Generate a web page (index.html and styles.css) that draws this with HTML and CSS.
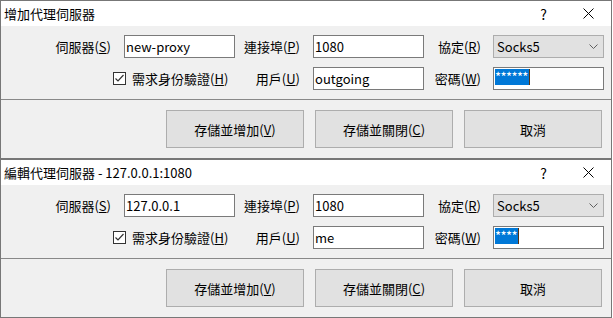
FILE: index.html
```html
<!DOCTYPE html>
<html lang="zh-Hant">
<head>
<meta charset="utf-8">
<title>代理伺服器</title>
<link rel="stylesheet" href="styles.css">
</head>
<body>
<div class="dlg">
  <div class="titlebar">
    <span class="title">增加代理伺服器</span>
    <span class="tbtn help">?</span>
    <span class="tbtn close"><svg width="11" height="11" viewBox="0 0 11 11"><path d="M0.5 0.5L10.5 10.5M10.5 0.5L0.5 10.5" stroke="#000" stroke-width="1" fill="none"/></svg></span>
  </div>
  <div class="form">
    <span class="lbl">伺服器(<u>S</u>)</span>
    <div class="input">new-proxy</div>
    <span class="lbl">連接埠(<u>P</u>)</span>
    <div class="input">1080</div>
    <span class="lbl p12">協定(<u>R</u>)</span>
    <div class="select"><span>Socks5</span><svg width="9" height="5" viewBox="0 0 9 5"><path d="M0.5 0.5L4.5 4.5L8.5 0.5" stroke="#606060" stroke-width="1" fill="none"/></svg></div>
    <div class="chk"><span class="box"><svg width="11" height="11" viewBox="0 0 11 11"><path d="M1.5 5.5L4 8L9.5 2" stroke="#333" stroke-width="1.2" fill="none"/></svg></span><span>需求身份驗證(<u>H</u>)</span></div>
    <span class="lbl">用戶(<u>U</u>)</span>
    <div class="input">outgoing</div>
    <span class="lbl p12">密碼(<u>W</u>)</span>
    <div class="input pw"><span class="sel">******</span><span class="caret"></span></div>
  </div>
  <div class="actions">
    <button class="btn">存儲並增加(<u>V</u>)</button>
    <button class="btn">存儲並關閉(<u>C</u>)</button>
    <button class="btn">取消</button>
  </div>
</div>
<div class="dlg">
  <div class="titlebar">
    <span class="title">編輯代理伺服器 - 127.0.0.1:1080</span>
    <span class="tbtn help">?</span>
    <span class="tbtn close"><svg width="11" height="11" viewBox="0 0 11 11"><path d="M0.5 0.5L10.5 10.5M10.5 0.5L0.5 10.5" stroke="#000" stroke-width="1" fill="none"/></svg></span>
  </div>
  <div class="form">
    <span class="lbl">伺服器(<u>S</u>)</span>
    <div class="input">127.0.0.1</div>
    <span class="lbl">連接埠(<u>P</u>)</span>
    <div class="input">1080</div>
    <span class="lbl p12">協定(<u>R</u>)</span>
    <div class="select"><span>Socks5</span><svg width="9" height="5" viewBox="0 0 9 5"><path d="M0.5 0.5L4.5 4.5L8.5 0.5" stroke="#606060" stroke-width="1" fill="none"/></svg></div>
    <div class="chk"><span class="box"><svg width="11" height="11" viewBox="0 0 11 11"><path d="M1.5 5.5L4 8L9.5 2" stroke="#333" stroke-width="1.2" fill="none"/></svg></span><span>需求身份驗證(<u>H</u>)</span></div>
    <span class="lbl">用戶(<u>U</u>)</span>
    <div class="input">me</div>
    <span class="lbl p12">密碼(<u>W</u>)</span>
    <div class="input pw"><span class="sel">****</span><span class="caret"></span></div>
  </div>
  <div class="actions">
    <button class="btn">存儲並增加(<u>V</u>)</button>
    <button class="btn">存儲並關閉(<u>C</u>)</button>
    <button class="btn">取消</button>
  </div>
</div>
</body>
</html>
```
FILE: styles.css
```css
html, body {
  margin: 0;
  padding: 0;
  background: #ffffff;
}
body {
  font-family: "Noto Sans CJK TC", "Noto Sans", sans-serif;
  font-size: 13px;
  color: #000;
}
.dlg {
  width: 612px;
  height: 159px;
  box-sizing: border-box;
  border: 1px solid #777777;
  background: #f0f0f0;
  display: flex;
  flex-direction: column;
}
.titlebar {
  flex: none;
  height: 25px;
  background: #ffffff;
  display: flex;
  align-items: center;
}
.title {
  flex: 1;
  padding-left: 3px;
  line-height: 25px;
  white-space: nowrap;
}
.tbtn {
  width: 45px;
  height: 25px;
  display: flex;
  align-items: center;
  justify-content: center;
}
.help {
  font-size: 14px;
}
.form {
  flex: none;
  display: grid;
  grid-template-columns: 123px 111px 78px 111px 69px 111px;
  grid-auto-rows: 23px;
  row-gap: 9px;
  padding: 9px 0;
}
.lbl {
  justify-self: end;
  align-self: center;
  padding-right: 13px;
  white-space: nowrap;
  line-height: 18px;
}
.lbl.p12 {
  padding-right: 12px;
}
.input {
  box-sizing: border-box;
  border: 1px solid #7a7a7a;
  background: #ffffff;
  padding-left: 1px;
  display: flex;
  align-items: center;
  line-height: 18px;
}
.select {
  box-sizing: border-box;
  border: 1px solid #adadad;
  background: #e1e1e1;
  display: flex;
  align-items: center;
  justify-content: space-between;
  padding: 0 5px 0 3px;
  line-height: 18px;
}
.chk {
  grid-column: 1 / 3;
  display: flex;
  align-items: center;
  padding-left: 112px;
  gap: 6px;
  white-space: nowrap;
  line-height: 18px;
}
.box {
  width: 13px;
  height: 13px;
  box-sizing: border-box;
  border: 1px solid #333333;
  background: #ffffff;
  display: flex;
  align-items: center;
  justify-content: center;
}
.pw {
  align-items: flex-start;
  padding-top: 1px;
}
.sel {
  background: #0078d7;
  color: #ffffff;
  height: 16px;
  line-height: 16px;
  letter-spacing: -0.6px;
  padding-right: 1px;
}
.caret {
  width: 1px;
  height: 16px;
  background: #5a3210;
}
.actions {
  flex: 1;
  border-top: 1px solid #888888;
  display: flex;
  justify-content: flex-end;
  gap: 11px;
  padding: 10px 9px 0 0;
}
.btn {
  box-sizing: border-box;
  width: 138px;
  height: 38px;
  border: 1px solid #adadad;
  background: #e1e1e1;
  font: inherit;
  color: #000;
  padding: 0;
  margin: 0;
}
```
